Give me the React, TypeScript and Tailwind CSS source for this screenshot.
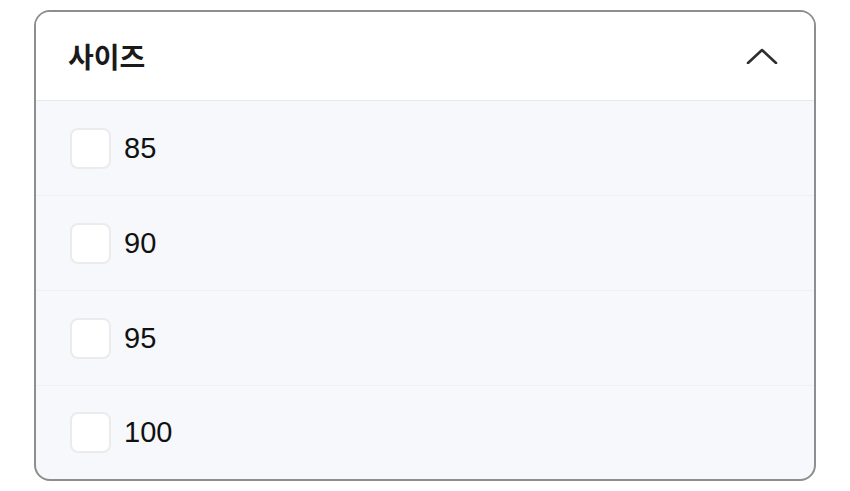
import React from "react";

const sizes = ["85", "90", "95", "100"];

function ChevronUp() {
  return (
    <svg width="32" height="16" viewBox="0 0 32 16" fill="none" aria-hidden="true">
      <path
        d="M2 15 L16 2 L30 15"
        stroke="#2f2f2f"
        strokeWidth="2.6"
        strokeLinecap="round"
        strokeLinejoin="round"
      />
    </svg>
  );
}

export default function App() {
  return (
    <div className="w-[850px] h-[491px] bg-white px-[34px] pt-[10px] pb-[10px]">
      <div className="rounded-[16px] border-2 border-[#8e8e8e] overflow-hidden bg-[#f7f8fb]">
        <div className="h-[89px] bg-white flex items-center justify-between pl-[32px] pr-[36px] border-b border-[#e6e8ec]">
          <span
            className="text-[28px] font-semibold text-[#1a1a1a] leading-none"
            style={{ fontFamily: '"Noto Sans CJK KR", "Noto Sans", sans-serif' }}
          >
            사이즈
          </span>
          <ChevronUp />
        </div>
        {sizes.map((s, i) => (
          <div
            key={s}
            className={
              i < sizes.length - 1
                ? "h-[95px] flex items-center pl-[34px] border-b border-[#eef0f3]"
                : "h-[93px] flex items-center pl-[34px]"
            }
          >
            <span className="w-[41px] h-[41px] rounded-[8px] border-2 border-[#ebebed] bg-white shrink-0" />
            <span
              className="ml-[13px] text-[29px] text-[#111] leading-none"
              style={{ fontFamily: '"Liberation Sans", Arial, sans-serif' }}
            >
              {s}
            </span>
          </div>
        ))}
      </div>
    </div>
  );
}
